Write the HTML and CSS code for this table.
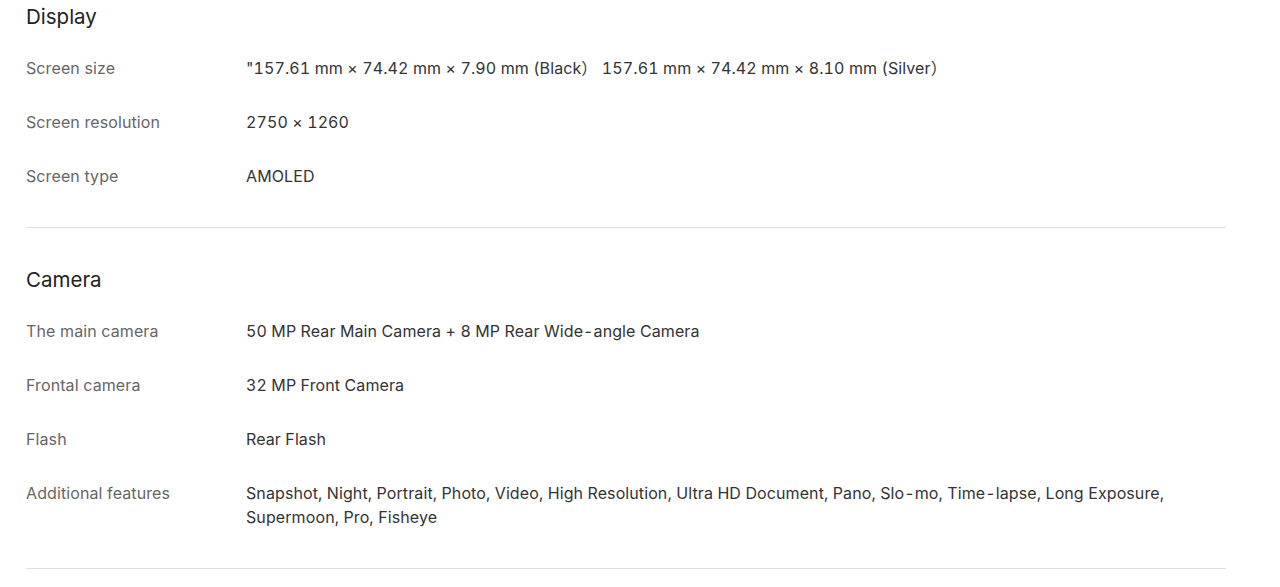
FILE: index.html
```html
<!DOCTYPE html>
<html lang="en">

<head>
    <meta name="viewport" content="width=device-width, initial-scale=1.0">
    <title>Specs</title>
    <link rel="stylesheet" href="styles.css">
</head>

<body>
    <!-- Especificações -->
    <div class="specs">
        <div class="grupo">
            <h3 class="grupo-titulo">Display</h3>
            <div class="linha">
                <div class="rotulo">Screen size</div>
                <div class="valor">"157.61 mm × 74.42 mm × 7.90 mm (Black） 157.61 mm × 74.42 mm × 8.10 mm (Silver）</div>
            </div>
            <div class="linha">
                <div class="rotulo">Screen resolution</div>
                <div class="valor">2750 × 1260</div>
            </div>
            <div class="linha">
                <div class="rotulo">Screen type</div>
                <div class="valor">AMOLED</div>
            </div>
        </div>

        <div class="grupo">
            <h3 class="grupo-titulo">Camera</h3>
            <div class="linha">
                <div class="rotulo">The main camera</div>
                <div class="valor">50 MP Rear Main Camera + 8 MP Rear Wide-angle Camera</div>
            </div>
            <div class="linha">
                <div class="rotulo">Frontal camera</div>
                <div class="valor">32 MP Front Camera</div>
            </div>
            <div class="linha">
                <div class="rotulo">Flash</div>
                <div class="valor">Rear Flash</div>
            </div>
            <div class="linha">
                <div class="rotulo">Additional features</div>
                <div class="valor">Snapshot, Night, Portrait, Photo, Video, High Resolution, Ultra HD Document, Pano, Slo-mo, Time-lapse, Long Exposure, Supermoon, Pro, Fisheye</div>
            </div>
        </div>
    </div>
</body>

</html>
```
FILE: styles.css
```css
* {
    padding: 0;
    margin: 0;
    box-sizing: border-box;
}

body {
    background-color: white;
    font-family: 'Inter', 'Noto Sans CJK SC', sans-serif;
}

.specs {
    width: 1200px;
    margin-left: 26px;
}

.grupo {
    padding: 40px 0 24px;
    border-bottom: 1px solid #e0e0e0;
}

.grupo:first-child {
    padding-top: 5px;
}

.grupo-titulo {
    font-size: 20.5px;
    font-weight: normal;
    line-height: 24px;
    color: #222;
    margin-bottom: 12px;
}

.linha {
    display: flex;
    padding: 15px 0;
    font-size: 16px;
    line-height: 24px;
    letter-spacing: 0.1px;
}

.rotulo {
    width: 220px;
    flex-shrink: 0;
    color: #666;
}

.valor {
    color: #333;
    flex: 1;
    padding-right: 40px;
    font-variant-numeric: tabular-nums;
}
```
